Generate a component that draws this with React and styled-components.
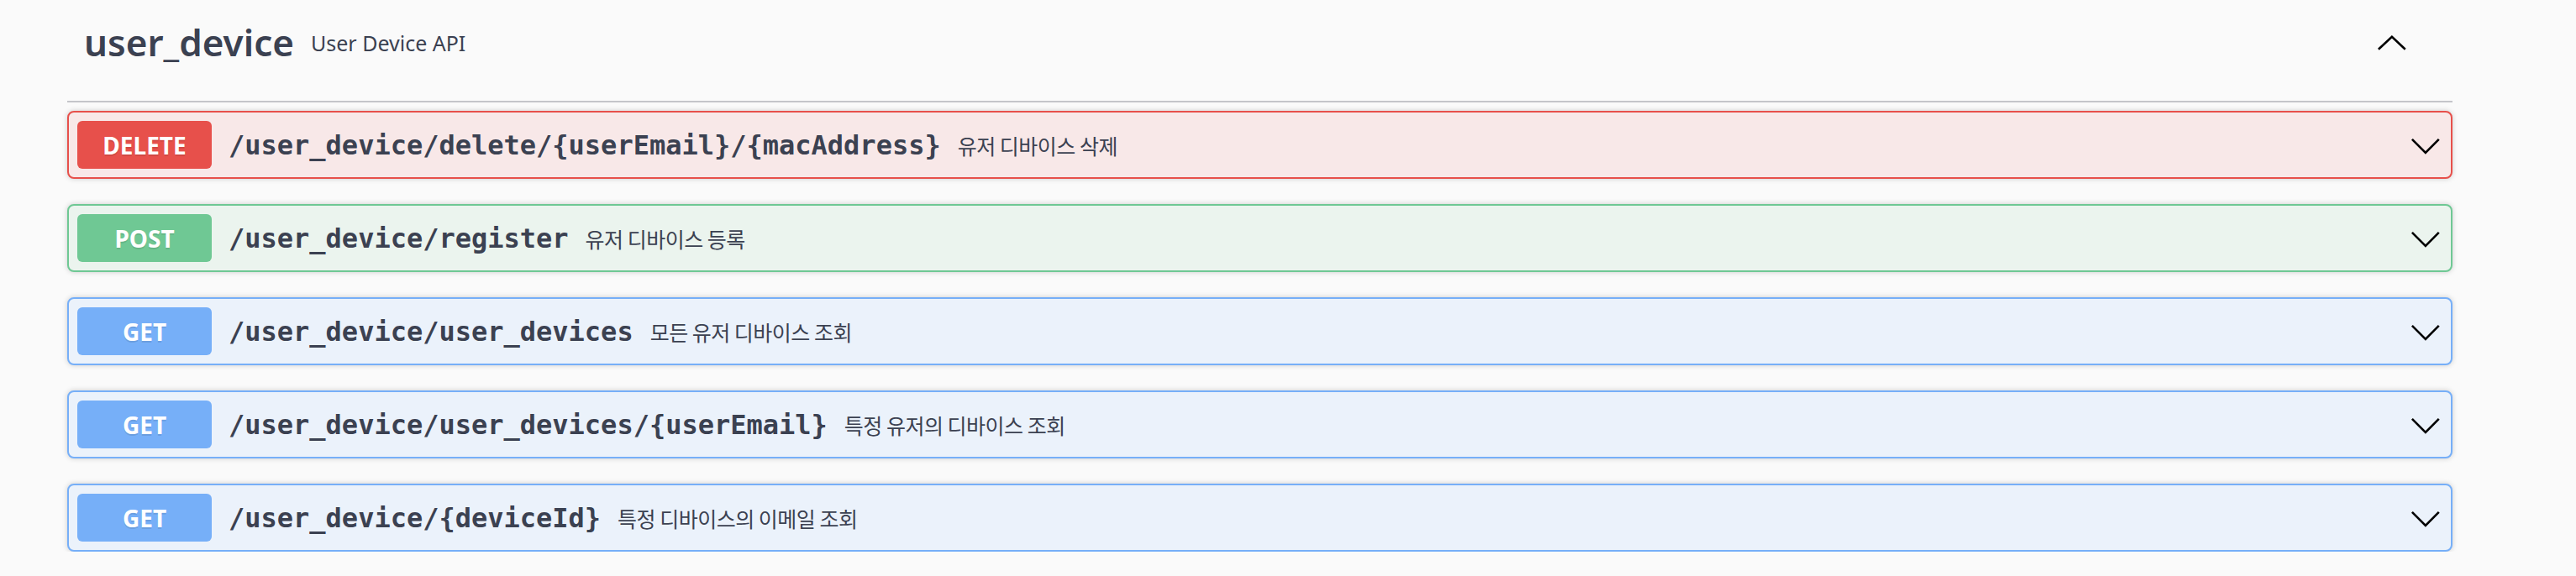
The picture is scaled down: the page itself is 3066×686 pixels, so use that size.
import styled, { createGlobalStyle } from 'styled-components';

const GlobalStyle = createGlobalStyle`
  html, body {
    margin: 0;
    padding: 0;
    background: #fafafa;
  }
  body {
    font-family: 'Noto Sans', 'Noto Sans CJK KR', sans-serif;
    color: #3b4151;
  }
`;

const methodColors = {
  delete: { main: '#e7504b', bg: '#f8e8e8' },
  post: { main: '#6fc894', bg: '#ebf4ee' },
  get: { main: '#76aff8', bg: '#ebf2fb' },
};

const Section = styled.section`
  width: 2839px;
  margin-left: 80px;
  display: flex;
  flex-direction: column;
`;

const TagHeader = styled.h3`
  margin: 0;
  height: 102px;
  padding: 0 52px 18px 20px;
  border-bottom: 2px solid #c4c5ca;
  display: flex;
  align-items: center;
`;

const TagName = styled.span`
  font-family: 'Noto Sans', sans-serif;
  font-size: 44px;
  font-weight: 600;
  line-height: 1.2;
  color: #3b4151;
  position: relative;
  top: -1px;
`;

const TagDesc = styled.small`
  font-family: 'Noto Sans', sans-serif;
  font-size: 25px;
  font-weight: 400;
  line-height: 1.2;
  color: #3b4151;
  margin-left: 20px;
  flex: 1;
`;

const OpList = styled.div`
  display: flex;
  flex-direction: column;
  gap: 30px;
  margin-top: 10px;
`;

const OpBlock = styled.div`
  box-sizing: border-box;
  height: 81px;
  padding: 10px;
  display: flex;
  align-items: center;
  border: 2px solid ${(p) => methodColors[p.$method].main};
  background: ${(p) => methodColors[p.$method].bg};
  border-radius: 8px;
  box-shadow: 0 0 6px rgba(0, 0, 0, 0.19);
`;

const Method = styled.span`
  width: 160px;
  height: 57px;
  flex-shrink: 0;
  display: flex;
  align-items: center;
  justify-content: center;
  border-radius: 6px;
  background: ${(p) => methodColors[p.$method].main};
  color: #fff;
  font-family: 'Noto Sans', sans-serif;
  font-size: 28px;
  font-weight: 700;
  text-shadow: 0 2px 0 rgba(0, 0, 0, 0.1);
`;

const Path = styled.span`
  padding: 0 20px;
  font-family: 'DejaVu Sans Mono', 'Liberation Mono', monospace;
  font-size: 32px;
  font-weight: 700;
  color: #3b4151;
  white-space: nowrap;
`;

const Summary = styled.span`
  flex: 1;
  font-family: 'Noto Sans CJK KR', 'Noto Sans', sans-serif;
  font-size: 25px;
  letter-spacing: -0.5px;
  color: #3b4151;
  white-space: nowrap;
`;

const Chevron = ({ up }) => (
  <svg width="40" height="40" viewBox="0 0 40 40" style={{ flexShrink: 0 }}>
    <polyline
      points={up ? '3.9,27.8 19.9,12.8 35.8,27.8' : '3.9,12.8 19.9,29 35.8,12.8'}
      fill="none"
      stroke="#000"
      strokeWidth="2.6"
    />
  </svg>
);

const operations = [
  { method: 'delete', path: '/user_device/delete/{userEmail}/{macAddress}', summary: '유저 디바이스 삭제' },
  { method: 'post', path: '/user_device/register', summary: '유저 디바이스 등록' },
  { method: 'get', path: '/user_device/user_devices', summary: '모든 유저 디바이스 조회' },
  { method: 'get', path: '/user_device/user_devices/{userEmail}', summary: '특정 유저의 디바이스 조회' },
  { method: 'get', path: '/user_device/{deviceId}', summary: '특정 디바이스의 이메일 조회' },
];

const App = () => {
  return (
    <>
      <GlobalStyle />
      <Section>
        <TagHeader>
          <TagName>user_device</TagName>
          <TagDesc>User Device API</TagDesc>
          <Chevron up />
        </TagHeader>
        <OpList>
          {operations.map((op) => (
            <OpBlock key={op.path} $method={op.method}>
              <Method $method={op.method}>{op.method.toUpperCase()}</Method>
              <Path>{op.path}</Path>
              <Summary>{op.summary}</Summary>
              <Chevron />
            </OpBlock>
          ))}
        </OpList>
      </Section>
    </>
  );
};

export default App;
